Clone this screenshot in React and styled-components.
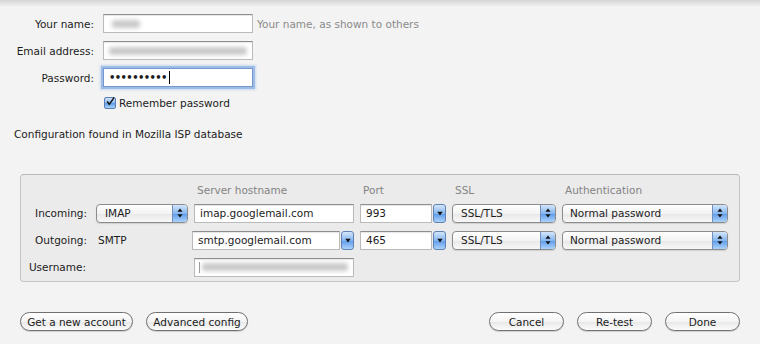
import React from 'react';
import styled, { createGlobalStyle, css } from 'styled-components';

const GlobalStyle = createGlobalStyle`
  html, body {
    margin: 0;
    padding: 0;
  }
  body {
    background: #f3f3f3;
    font-family: "DejaVu Sans", "Liberation Sans", sans-serif;
    font-size: 10.5px;
    color: #1c1c1c;
  }
`;

const Window = styled.div`
  width: 760px;
  height: 344px;
  box-sizing: border-box;
  padding-top: 14px;
  overflow: hidden;
  background: linear-gradient(#d5d5d5, #f3f3f3 7px);
`;

const AccountForm = styled.div`
  display: grid;
  grid-template-columns: 94px 150px auto;
  column-gap: 9px;
  row-gap: 8px;
  align-items: center;
`;

const Label = styled.label`
  text-align: right;
  white-space: nowrap;
  padding-right: ${p => p.$pad || 0}px;
`;

const Hint = styled.span`
  color: #8a8a8a;
  margin-left: -5px;
  white-space: nowrap;
`;

const TextField = styled.div`
  height: 19px;
  box-sizing: border-box;
  display: flex;
  align-items: center;
  padding: 0 5px;
  background: #fff;
  border: 1px solid #bababa;
  border-top-color: #8e8e8e;
  box-shadow: inset 0 1px 1px rgba(0, 0, 0, 0.1);
  white-space: nowrap;
  overflow: hidden;
  ${p => p.$focused && css`
    border-color: #7597cb;
    box-shadow: 0 0 0 2px #9dbde8, 0 0 2px 3px rgba(140, 178, 228, 0.4);
  `}
`;

const Blurred = styled.span`
  display: block;
  height: 8px;
  width: ${p => p.$w}px;
  margin-left: ${p => p.$left || 0}px;
  background: #c9c9c9;
  border-radius: 3px;
  filter: blur(2px);
`;

const Dots = styled.span`
  font-weight: bold;
  letter-spacing: -0.6px;
  font-size: 10px;
`;

const Caret = styled.span`
  display: inline-block;
  width: 1px;
  height: 13px;
  background: #000;
  margin-left: 2px;
`;

const CheckRow = styled.div`
  grid-column: 2 / 4;
  display: flex;
  align-items: center;
  gap: 3px;
  margin: 2px 0 0 1px;
`;

const CheckBox = styled.span`
  width: 12px;
  height: 12px;
  box-sizing: border-box;
  border: 1px solid #5a7fb4;
  border-radius: 2px;
  background: linear-gradient(#cfe3fa, #86b6ef 50%, #5d9ae8 51%, #a9d1fa);
  display: flex;
  align-items: center;
  justify-content: center;
`;

const Status = styled.p`
  margin: 18px 0 0 14px;
  line-height: 14px;
`;

const ServerPanel = styled.div`
  margin: 33px 20px 0;
  height: 108px;
  box-sizing: border-box;
  padding: 8px 11px 0 3px;
  background: #ebebeb;
  border: 1px solid #c6c6c6;
  border-top-color: #b9b9b9;
  border-radius: 4px;
  display: grid;
  grid-template-columns: 66px 92px 160px 86px 104px 166px;
  grid-template-rows: 13px 20px 20px 20px;
  column-gap: 6px;
  row-gap: 7px;
  align-items: center;
`;

const ColumnHead = styled.span`
  grid-column: ${p => p.$col};
  color: #848484;
  padding-left: 3px;
  white-space: nowrap;
`;

const Plain = styled.span`
  padding-left: 2px;
`;

const Popup = styled.div`
  height: 19px;
  box-sizing: border-box;
  display: flex;
  border: 1px solid #8b8b8b;
  border-radius: 4px;
  overflow: hidden;
  background: linear-gradient(#ffffff, #f3f3f3 50%, #e7e7e7 51%, #f8f8f8);
  box-shadow: 0 1px 1px rgba(0, 0, 0, 0.12);
`;

const PopupText = styled.span`
  flex: 1;
  display: flex;
  align-items: center;
  padding-left: ${p => p.$pad || 8}px;
  white-space: nowrap;
`;

const Stepper = styled.span`
  width: 14px;
  border-left: 1px solid #6f90bf;
  background: linear-gradient(#d3e6fb, #86b6ef 50%, #5d9ae8 51%, #acd3fb);
  display: flex;
  align-items: center;
  justify-content: center;
`;

const Combo = styled.div`
  display: flex;
  gap: 1px;
  height: 19px;
  margin-left: ${p => p.$shift || 0}px;
`;

const ComboButton = styled.span`
  width: 13px;
  box-sizing: border-box;
  border: 1px solid #5f82b5;
  border-radius: 3px;
  background: linear-gradient(#d3e6fb, #86b6ef 50%, #5d9ae8 51%, #acd3fb);
  display: flex;
  align-items: center;
  justify-content: center;
`;

const ComboField = styled(TextField)`
  flex: 1;
`;

const Footer = styled.div`
  margin: 30px 20px 0;
  display: flex;
  justify-content: space-between;
`;

const ButtonGroup = styled.div`
  display: flex;
  gap: 13px;
`;

const PillButton = styled.button`
  width: ${p => p.$w}px;
  height: 19px;
  padding: 0;
  border: 1px solid #707070;
  border-radius: 10px;
  background: linear-gradient(#ffffff, #f4f4f4 50%, #e8e8e8 51%, #fbfbfb);
  box-shadow: 0 1px 1px rgba(0, 0, 0, 0.15);
  font: inherit;
  color: #1c1c1c;
  white-space: nowrap;
`;

const UpDown = () => (
  <svg width="6" height="10" viewBox="0 0 6 10">
    <path d="M3 0.5 L5.6 3.8 L0.4 3.8 Z M3 9.5 L5.6 6.2 L0.4 6.2 Z" fill="#111" />
  </svg>
);

const Down = () => (
  <svg width="6" height="5" viewBox="0 0 6 5">
    <path d="M0.3 0.8 L5.7 0.8 L3 4.4 Z" fill="#111" />
  </svg>
);

const Check = () => (
  <svg width="11" height="11" viewBox="0 0 11 11" style={{ marginTop: -3, marginLeft: 1 }}>
    <path d="M1.5 5.5 L4 9 L9.8 0.8" stroke="#111" strokeWidth="1.8" fill="none" strokeLinejoin="round" />
  </svg>
);

const Select = ({ children, pad }) => (
  <Popup>
    <PopupText $pad={pad}>{children}</PopupText>
    <Stepper><UpDown /></Stepper>
  </Popup>
);

const ComboBox = ({ children, shift }) => (
  <Combo $shift={shift}>
    <ComboField>{children}</ComboField>
    <ComboButton><Down /></ComboButton>
  </Combo>
);

export default function App() {
  return (
    <Window>
      <GlobalStyle />
      <AccountForm>
        <Label>Your name:</Label>
        <TextField><Blurred $w={28} $left={3} /></TextField>
        <Hint>Your name, as shown to others</Hint>

        <Label>Email address:</Label>
        <TextField><Blurred $w={138} /></TextField>
        <span />

        <Label>Password:</Label>
        <TextField $focused>
          <Dots>••••••••••</Dots>
          <Caret />
        </TextField>
        <span />

        <CheckRow>
          <CheckBox><Check /></CheckBox>
          <span>Remember password</span>
        </CheckRow>
      </AccountForm>

      <Status>Configuration found in Mozilla ISP database</Status>

      <ServerPanel>
        <ColumnHead $col={3}>Server hostname</ColumnHead>
        <ColumnHead $col={4}>Port</ColumnHead>
        <ColumnHead $col={5}>SSL</ColumnHead>
        <ColumnHead $col={6}>Authentication</ColumnHead>

        <Label $pad={3}>Incoming:</Label>
        <Select>IMAP</Select>
        <TextField>imap.googlemail.com</TextField>
        <ComboBox>993</ComboBox>
        <Select>SSL/TLS</Select>
        <Select pad={7}>Normal password</Select>

        <Label $pad={3}>Outgoing:</Label>
        <Plain>SMTP</Plain>
        <ComboBox shift={-2}>smtp.googlemail.com</ComboBox>
        <ComboBox>465</ComboBox>
        <Select>SSL/TLS</Select>
        <Select pad={7}>Normal password</Select>

        <Label $pad={4}>Username:</Label>
        <span />
        <TextField>
          <Caret style={{ height: 11, marginLeft: -1, background: '#999' }} />
          <Blurred $w={146} $left={2} />
        </TextField>
      </ServerPanel>

      <Footer>
        <ButtonGroup>
          <PillButton $w={113}>Get a new account</PillButton>
          <PillButton $w={102}>Advanced config</PillButton>
        </ButtonGroup>
        <ButtonGroup>
          <PillButton $w={75}>Cancel</PillButton>
          <PillButton $w={75}>Re-test</PillButton>
          <PillButton $w={75}>Done</PillButton>
        </ButtonGroup>
      </Footer>
    </Window>
  );
}
